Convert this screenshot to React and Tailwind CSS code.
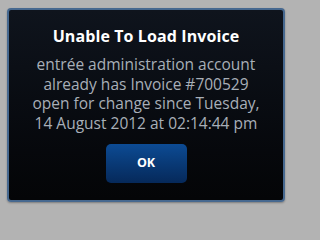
import React from 'react';

const App = () => {
  return (
    <div className="min-h-screen w-full bg-[#b3b3b3] pt-[8px] pl-[7px]" style={{ fontFamily: '"Open Sans", "Noto Sans", sans-serif' }}>
      <div className="w-[278px] h-[194px] rounded-[4px] border-2 border-[#46688f] bg-gradient-to-b from-[#0f141d] to-[#040507] flex flex-col items-center shadow-[0_1px_2px_rgba(0,0,0,0.3)]">
        <h1 className="mt-[16px] text-[16px] font-bold text-white leading-[20px] tracking-[0.1px]">Unable To Load Invoice</h1>
        <p className="mt-[9px] text-center text-[15.5px] leading-[19.5px] text-[#a8afb8] whitespace-nowrap">
          entrée administration account<br />
          already has Invoice #700529<br />
          open for change since Tuesday,<br />
          14 August 2012 at 02:14:44 pm
        </p>
        <button className="mt-[11px] w-[81px] h-[39px] rounded-[5px] bg-gradient-to-b from-[#0c4b94] to-[#06295a] text-white text-[12.5px] font-bold">
          OK
        </button>
      </div>
    </div>
  );
};

export default App;
